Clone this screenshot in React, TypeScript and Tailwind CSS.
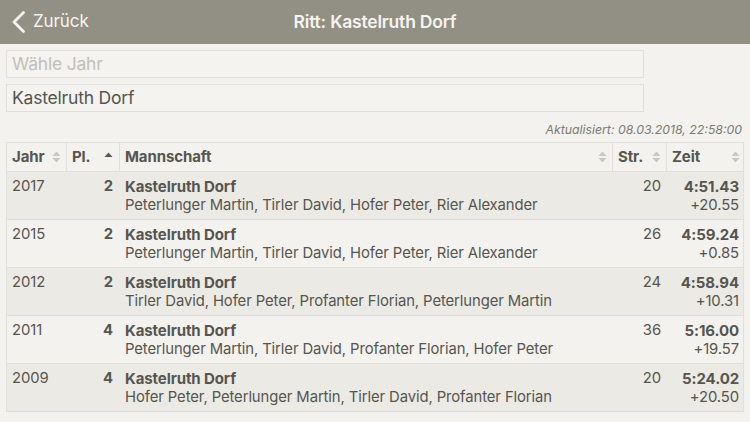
import React from "react";

const rows = [
  { y: "2017", pl: "2", str: "20", t: "4:51.43", d: "+20.55", names: "Peterlunger Martin, Tirler David, Hofer Peter, Rier Alexander" },
  { y: "2015", pl: "2", str: "26", t: "4:59.24", d: "+0.85", names: "Peterlunger Martin, Tirler David, Hofer Peter, Rier Alexander" },
  { y: "2012", pl: "2", str: "24", t: "4:58.94", d: "+10.31", names: "Tirler David, Hofer Peter, Profanter Florian, Peterlunger Martin" },
  { y: "2011", pl: "4", str: "36", t: "5:16.00", d: "+19.57", names: "Peterlunger Martin, Tirler David, Profanter Florian, Hofer Peter" },
  { y: "2009", pl: "4", str: "20", t: "5:24.02", d: "+20.50", names: "Hofer Peter, Peterlunger Martin, Tirler David, Profanter Florian" },
];

function SortBoth() {
  return (
    <svg width="9" height="12" viewBox="0 0 9 12" className="shrink-0">
      <path d="M4.5 0.5 L8.5 5 L0.5 5 Z" fill="#c9c7c1" />
      <path d="M4.5 11.5 L8.5 7 L0.5 7 Z" fill="#c9c7c1" />
    </svg>
  );
}

function SortUp() {
  return (
    <svg width="9" height="12" viewBox="0 0 9 12" className="shrink-0">
      <path d="M4.5 1.5 L8.5 6 L0.5 6 Z" fill="#5a5852" />
    </svg>
  );
}

export default function App() {
  return (
    <div
      className="w-[750px] h-[422px] overflow-hidden bg-[#f3f2ee] text-[#57554f]"
      style={{ fontFamily: "Inter, 'Noto Sans', sans-serif" }}
    >
      <div className="h-[44px] bg-[#928f85] relative flex items-center justify-center">
        <div className="absolute left-[11px] top-0 h-full flex items-center gap-[6px] text-[#f6f4ee]">
          <svg width="16" height="24" viewBox="0 0 16 24">
            <path d="M12.5 2.5 L3 12 L12.5 21.5" fill="none" stroke="#f6f4ee" strokeWidth="2.8" strokeLinecap="round" strokeLinejoin="round" />
          </svg>
          <span className="text-[17px] tracking-[-0.1px]">Zurück</span>
        </div>
        <span className="text-[17.5px] font-semibold text-[#f6f4ee] tracking-[-0.2px]">Ritt: Kastelruth Dorf</span>
      </div>

      <div className="px-[6px] pt-[6px] flex flex-col gap-[6px]">
        <div className="w-[638px] h-[28px] border border-[#e1dfd9] bg-[#f4f3ef] flex items-center px-[5px] text-[17.5px] text-[#c2c0ba] tracking-[-0.2px]">
          Wähle Jahr
        </div>
        <div className="w-[638px] h-[28px] border border-[#e1dfd9] bg-[#f4f3ef] flex items-center px-[5px] text-[17.5px] text-[#57554f] tracking-[-0.2px]">
          Kastelruth Dorf
        </div>
      </div>

      <div className="pr-[8px] pt-[9px] pb-[3px] text-right italic text-[12.3px] text-[#7d7b75]">
        Aktualisiert: 08.03.2018, 22:58:00
      </div>

      <div className="mx-[6px] w-[738px] border-l border-r border-t border-[#e1dfd9]">
        <div className="grid grid-cols-[60px_53px_493px_54px_78px] h-[29px] border-b border-[#e1dfd9] text-[15px] font-bold tracking-[-0.1px]">
          <div className="flex items-center justify-between pl-[5px] pr-[5px] border-r border-[#e1dfd9]">
            <span>Jahr</span>
            <SortBoth />
          </div>
          <div className="flex items-center justify-between pl-[5px] pr-[6px] border-r border-[#e1dfd9]">
            <span>Pl.</span>
            <SortUp />
          </div>
          <div className="flex items-center justify-between pl-[5px] pr-[5px] border-r border-[#e1dfd9]">
            <span>Mannschaft</span>
            <SortBoth />
          </div>
          <div className="flex items-center justify-between pl-[5px] pr-[5px] border-r border-[#e1dfd9]">
            <span>Str.</span>
            <SortBoth />
          </div>
          <div className="flex items-center justify-between pl-[5px] pr-[5px]">
            <span>Zeit</span>
            <SortBoth />
          </div>
        </div>
        {rows.map((r, i) => (
          <div
            key={r.y}
            className={`grid grid-cols-[60px_53px_493px_54px_78px] h-[48px] border-b border-[#e1dfd9] text-[14.85px] leading-[19px] tracking-[-0.1px] ${i % 2 === 0 ? "bg-[#ebeae5]" : "bg-[#f3f2ee]"}`}
          >
            <div className="pl-[5px] pt-[5px]">{r.y}</div>
            <div className="pr-[7px] pt-[5px] text-right font-bold">{r.pl}</div>
            <div className="pl-[5px] pt-[5px]">
              <div className="font-bold text-[15px]">Kastelruth Dorf</div>
              <div>{r.names}</div>
            </div>
            <div className="pr-[6px] pt-[5px] text-right">{r.str}</div>
            <div className="pr-[6px] pt-[5px] text-right">
              <div className="font-bold text-[15px]">{r.t}</div>
              <div>{r.d}</div>
            </div>
          </div>
        ))}
      </div>
    </div>
  );
}
